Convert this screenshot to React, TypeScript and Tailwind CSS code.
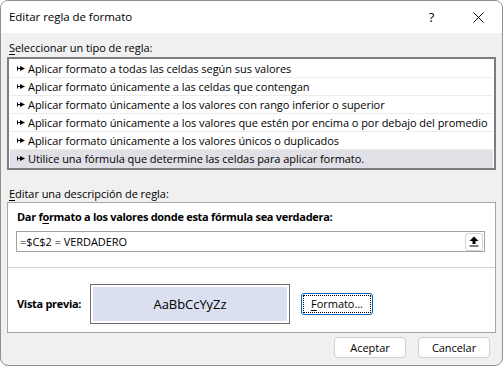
import React from "react";

const FONT = "font-['Segoe_UI','Open_Sans',sans-serif]";

const rules = [
  "Aplicar formato a todas las celdas según sus valores",
  "Aplicar formato únicamente a las celdas que contengan",
  "Aplicar formato únicamente a los valores con rango inferior o superior",
  "Aplicar formato únicamente a los valores que estén por encima o por debajo del promedio",
  "Aplicar formato únicamente a los valores únicos o duplicados",
  "Utilice una fórmula que determine las celdas para aplicar formato.",
];

function RuleArrow() {
  return (
    <svg width="8" height="7" viewBox="0 0 8 7" className="shrink-0">
      <path d="M0.5 1.5V5.5" stroke="#000" strokeWidth="1" />
      <path d="M0 3.5H4" stroke="#000" strokeWidth="1" />
      <path d="M3 1L8 3.5L3 6Z" fill="#000" />
    </svg>
  );
}

function CollapseIcon() {
  return (
    <svg width="10" height="11" viewBox="0 0 10 11">
      <path d="M5 0.5L9.5 5H6.5V8H3.5V5H0.5Z" fill="#000" />
      <path d="M0.5 10H9.5" stroke="#000" strokeWidth="1.2" />
    </svg>
  );
}

export default function App() {
  return (
    <div className={`w-[503px] h-[366px] bg-white ${FONT} text-[11px] tracking-[-0.05px] text-black`}>
      <div className="w-[503px] h-[366px] flex flex-col rounded-[8px] border border-[#8f8f8f] overflow-hidden bg-[#f0f0f0]">
        {/* title bar */}
        <div className="h-[32px] bg-white flex items-center shrink-0">
          <span className="pl-[8px] text-[11.5px] leading-[14px] flex-1">Editar regla de formato</span>
          <span className="w-[46px] text-center text-[13px] leading-[14px] pr-[3px]">?</span>
          <span className="w-[46px] flex items-center justify-center pr-[1px]">
            <svg width="11" height="11" viewBox="0 0 11 11">
              <path d="M0.5 0.5L10.5 10.5M10.5 0.5L0.5 10.5" stroke="#000" strokeWidth="1" />
            </svg>
          </span>
        </div>

        <div className="flex flex-col px-[6px] pt-[8px]">
          <div className="pl-[2px] leading-[14px]">
            <span className="underline underline-offset-2">S</span>eleccionar un tipo de regla:
          </div>

          {/* rule list */}
          <div className="mt-[2px] border-2 border-[#7d7d7d] bg-white pt-[1px] px-[1px] w-[489px] h-[113px]">
            {rules.map((r, i) => (
              <div
                key={i}
                className={`h-[18px] flex items-center gap-[3px] pl-[7px] border-b whitespace-nowrap ${
                  i === 5 ? "bg-[#e0e0e6] border-[#e0e0e6]" : "border-[#ececec]"
                }`}
              >
                <RuleArrow />
                <span className="leading-[14px]">{r}</span>
              </div>
            ))}
          </div>

          <div className="mt-[17px] pl-[2px] leading-[14px]">
            <span className="underline underline-offset-2">E</span>ditar una descripción de regla:
          </div>

          {/* description panel */}
          <div className="mt-[1px] w-[489px] h-[131px] border border-[#a5a5a5] bg-white flex flex-col">
            <div className="pl-[9px] pt-[7px] font-bold tracking-[-0.3px] leading-[14px]">
              Dar f<span className="underline underline-offset-2">o</span>rmato a los valores donde esta fórmula sea verdadera:
            </div>
            <div className="mt-[7px] ml-[8px] w-[469px] h-[21px] border border-[#a0a0a0] flex items-center">
              <span className="flex-1 pl-[3px] leading-[14px]">=$C$2 = VERDADERO</span>
              <span className="w-[18px] h-[18px] mr-[1px] border border-[#d0d0d0] rounded-[3px] flex items-center justify-center">
                <CollapseIcon />
              </span>
            </div>
            <div className="mt-[15px] h-px bg-[#d0d0d0]" />
            <div className="flex items-center pl-[9px] mt-[16px]">
              <span className="font-bold tracking-[-0.3px] leading-[14px] w-[73px]">Vista previa:</span>
              <div className="w-[200px] h-[40px] border border-[#6d6d6d] p-[2px]">
                <div className="w-full h-full bg-[#dae0f0] flex items-center justify-center leading-[14px] text-[13px]">
                  AaBbCcYyZz
                </div>
              </div>
              <div className="ml-[11px] w-[72px] h-[22px] border border-[#0067c0] rounded-[3px] p-[1px] bg-white">
                <div className="w-full h-full border border-dotted border-black flex items-center justify-center leading-[14px]">
                  <span>
                    <span className="underline underline-offset-2">F</span>ormato...
                  </span>
                </div>
              </div>
            </div>
          </div>

          {/* footer buttons */}
          <div className="flex justify-end gap-[12px] mt-[4px] pr-[6px]">
            <div className="w-[72px] h-[21px] border border-[#d0d0d0] rounded-[4px] bg-white flex items-center justify-center leading-[14px]">
              Aceptar
            </div>
            <div className="w-[72px] h-[21px] border border-[#d0d0d0] rounded-[4px] bg-white flex items-center justify-center leading-[14px]">
              Cancelar
            </div>
          </div>
        </div>
      </div>
    </div>
  );
}
